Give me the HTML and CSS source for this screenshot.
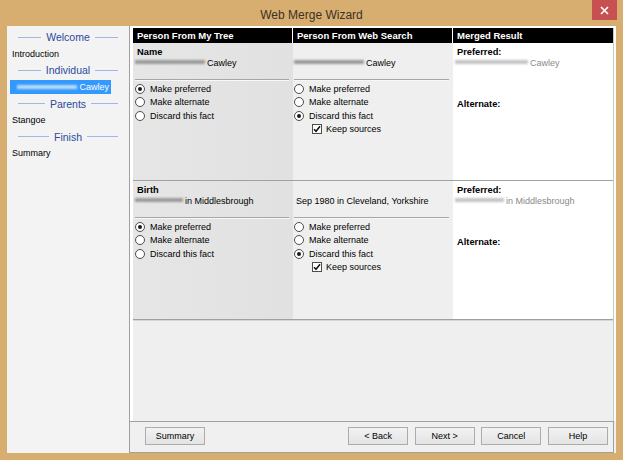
FILE: index.html
```html
<!DOCTYPE html>
<html>
<head>
<meta charset="utf-8">
<title>Web Merge Wizard</title>
<link rel="stylesheet" href="styles.css">
</head>
<body>
<div class="window">
  <div class="titlebar">
    <div class="title">Web Merge Wizard</div>
    <div class="close"><svg width="9" height="9" viewBox="0 0 9 9"><path d="M1 1L8 8M8 1L1 8" stroke="#fff" stroke-width="1.6" fill="none"/></svg></div>
  </div>
  <div class="client">
    <div class="sidebar">
      <div class="sec"><span class="ln"></span><span>Welcome</span><span class="ln"></span></div>
      <div class="item">Introduction</div>
      <div class="sec"><span class="ln"></span><span>Individual</span><span class="ln"></span></div>
      <div class="item sel"><span class="blur light w60"></span><span class="nm">Cawley</span></div>
      <div class="sec"><span class="ln"></span><span>Parents</span><span class="ln"></span></div>
      <div class="item">Stangoe</div>
      <div class="sec"><span class="ln"></span><span>Finish</span><span class="ln"></span></div>
      <div class="item">Summary</div>
    </div>
    <div class="main">
      <div class="panel">
        <div class="table">
          <div class="head">
            <div>Person From My Tree</div>
            <div>Person From Web Search</div>
            <div>Merged Result</div>
          </div>
          <div class="row r1">
            <div class="cell mine">
              <div class="lbl">Name</div>
              <div class="val"><span class="blur w70"></span>Cawley</div>
              <div class="sep"></div>
              <div class="opts">
                <div class="opt"><span class="radio on"></span>Make preferred</div>
                <div class="opt"><span class="radio"></span>Make alternate</div>
                <div class="opt"><span class="radio"></span>Discard this fact</div>
              </div>
            </div>
            <div class="cell web">
              <div class="lbl"></div>
              <div class="val"><span class="blur w70"></span>Cawley</div>
              <div class="sep"></div>
              <div class="opts">
                <div class="opt"><span class="radio"></span>Make preferred</div>
                <div class="opt"><span class="radio"></span>Make alternate</div>
                <div class="opt"><span class="radio on"></span>Discard this fact</div>
                <div class="opt keep"><span class="check"><svg width="8" height="8" viewBox="0 0 8 8"><path d="M1 4.2L3 6.3L7 1.2" stroke="#111" stroke-width="1.5" fill="none"/></svg></span>Keep sources</div>
              </div>
            </div>
            <div class="cell merged">
              <div class="lbl">Preferred:</div>
              <div class="val gray"><span class="blur pale w73"></span>Cawley</div>
              <div class="lbl alt">Alternate:</div>
            </div>
          </div>
          <div class="row r2">
            <div class="cell mine">
              <div class="lbl">Birth</div>
              <div class="val"><span class="blur w48"></span>in Middlesbrough</div>
              <div class="sep"></div>
              <div class="opts">
                <div class="opt"><span class="radio on"></span>Make preferred</div>
                <div class="opt"><span class="radio"></span>Make alternate</div>
                <div class="opt"><span class="radio"></span>Discard this fact</div>
              </div>
            </div>
            <div class="cell web">
              <div class="lbl"></div>
              <div class="val">Sep 1980 in Cleveland, Yorkshire</div>
              <div class="sep"></div>
              <div class="opts">
                <div class="opt"><span class="radio"></span>Make preferred</div>
                <div class="opt"><span class="radio"></span>Make alternate</div>
                <div class="opt"><span class="radio on"></span>Discard this fact</div>
                <div class="opt keep"><span class="check"><svg width="8" height="8" viewBox="0 0 8 8"><path d="M1 4.2L3 6.3L7 1.2" stroke="#111" stroke-width="1.5" fill="none"/></svg></span>Keep sources</div>
              </div>
            </div>
            <div class="cell merged">
              <div class="lbl">Preferred:</div>
              <div class="val gray"><span class="blur pale w49"></span>in Middlesbrough</div>
              <div class="lbl alt">Alternate:</div>
            </div>
          </div>
        </div>
      </div>
      <div class="bar">
        <button class="btn first">Summary</button>
        <button class="btn">&lt; Back</button>
        <button class="btn">Next &gt;</button>
        <button class="btn">Cancel</button>
        <button class="btn">Help</button>
      </div>
    </div>
  </div>
</div>
</body>
</html>
```
FILE: styles.css
```css
* { box-sizing: border-box; margin: 0; padding: 0; }
html, body { width: 623px; height: 460px; overflow: hidden; }
body {
  background: #d7ae70;
  font-family: "Liberation Sans", Arial, sans-serif;
  font-size: 9px;
  color: #000;
}
.window { width: 623px; height: 460px; display: flex; flex-direction: column; }
.titlebar { height: 26px; position: relative; text-align: center; }
.title { font-size: 12px; line-height: 22px; padding-top: 4px; color: #3a3128; }
.close {
  position: absolute; top: 0; right: 6px; width: 25px; height: 20px;
  background: #c75050; display: flex; align-items: center; justify-content: center;
}
.client { display: flex; height: 427px; margin: 0 7px; background: #f0f0f0; }

.sidebar { width: 122px; flex: none; padding-top: 3px; background: #f3f3f3; }
.sec {
  display: flex; align-items: center; gap: 5px; padding: 0 11px;
  height: 16.6px; color: #2b4aa0; font-size: 10.5px;
}
.ln { flex: 1; height: 1px; background: #a3b6e4; }
.item { height: 16.6px; line-height: 16.6px; padding-left: 5px; white-space: nowrap; }
.item.sel {
  display: flex; align-items: center; justify-content: flex-end;
  height: 14px; line-height: 14px; margin: 1.3px 18px 1.3px 3px;
  background: #3399ff; color: #fff; padding: 0 2px 0 2px;
}
.nm { line-height: 12px; }

.main { width: 487px; flex: none; display: flex; flex-direction: column; }
.panel {
  height: 395px; background: #fff; border-left: 1px solid #a0a0a0;
  padding: 2px 2px 0 3px;
}
.table { width: 481px; height: 393px; background: #efefef; border-right: 1px solid #c8c8c8; }
.head {
  display: grid; grid-template-columns: 160px 160px 160px; height: 15px;
  background: #000; color: #fff; font-weight: bold; font-size: 9.5px; line-height: 15px;
}
.head div { padding-left: 4px; border-right: 1px solid #fff; white-space: nowrap; }
.head div:last-child { border-right: none; }

.row {
  display: grid; grid-template-columns: 160px 160px 160px;
  border-bottom: 1px solid #a0a0a0;
}
.r1 { height: 138px; }
.r2 { height: 139px; box-shadow: 0 1px 0 #d6d6d6; }
.cell { padding: 4px 0 0 4px; }
.mine { background: linear-gradient(90deg, #e6e6e6, #e1e1e1); }
.web { background: #efefef; padding-left: 3px; }
.merged { background: #fff; }
.lbl { font-weight: bold; font-size: 9.3px; line-height: 11px; height: 11px; white-space: nowrap; }
.lbl.alt { margin-top: 30px; }
.val { line-height: 11px; height: 11px; white-space: nowrap; }
.gray { color: #8a8a8a; }

.blur {
  display: inline-block; height: 4px; margin-left: -2px; margin-right: 2px;
  background: #9a9a9a; filter: blur(1.2px); vertical-align: 2px;
}
.blur.pale { background: #c4c4c4; }
.blur.light { background: #b9dcff; margin-left: 0; flex: none; }
.w60 { width: 60px; }
.w70 { width: 70px; }
.w73 { width: 73px; }
.w48 { width: 48px; }
.w49 { width: 49px; }

.sep {
  height: 2px; border-top: 1px solid #a6a6a6; border-bottom: 1px solid #f8f8f8;
  margin: 10px 4px 0 -2px;
}
.opts { padding-top: 1px; }
.opt { display: flex; align-items: center; height: 13.5px; gap: 5px; white-space: nowrap; }
.radio {
  width: 10px; height: 10px; border: 1px solid #4d4d4d; border-radius: 50%;
  background: #fff; margin-left: -2px; flex: none;
  display: flex; align-items: center; justify-content: center;
}
.radio.on::after { content: ""; width: 4px; height: 4px; border-radius: 50%; background: #1a1a1a; }
.opt.keep { padding-left: 16px; gap: 4px; }
.check {
  width: 10px; height: 10px; border: 1px solid #4d4d4d; background: #fff; flex: none;
  display: flex; align-items: center; justify-content: center;
}

.bar {
  height: 32px; width: 485px; border: 1px solid #a0a0a0; background: #f0f0f0;
  display: flex; padding: 5px 5px 0 15px; gap: 6.67px;
}
.btn {
  width: 60px; height: 18px; border: 1px solid #acacac;
  background: linear-gradient(#f2f2f2, #e4e4e4);
  font-family: "Liberation Sans", Arial, sans-serif; font-size: 9px; color: #000;
  display: flex; align-items: center; justify-content: center;
}
.btn.first { margin-right: auto; }
```
